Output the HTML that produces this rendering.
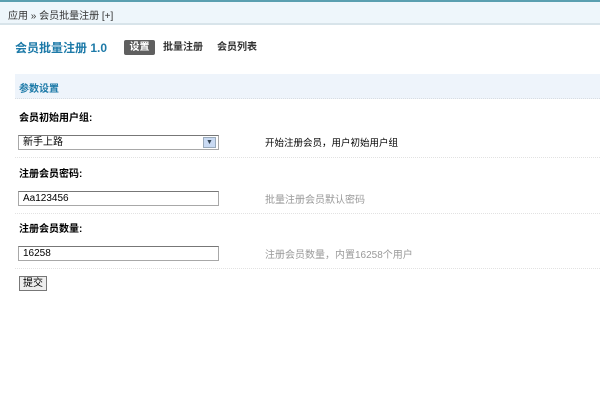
<!DOCTYPE html>
<html><head><meta charset="utf-8"><style>
*{margin:0;padding:0;box-sizing:border-box}
body{width:600px;height:407px;background:#fff;font-family:"Liberation Sans","Noto Sans CJK SC",sans-serif;font-size:10px;color:#000;position:relative;overflow:hidden}
.a{position:absolute;white-space:nowrap}
.top{left:0;top:0;width:600px;height:2px;background:#5a9fb0}
.bar{left:0;top:2px;width:600px;height:23px;background:#eef6fb;border-bottom:2px solid #d8e4ea}
.crumb{left:8px;top:7px;color:#333}
.title{left:15px;top:39px;font-size:12px;font-weight:bold;color:#1d7aa8}
.tab{top:40px;height:15px;line-height:15px;font-weight:bold;font-size:10px}
.sec{left:15px;top:74px;width:585px;height:25px;background:#eef4fb;border-bottom:1px dotted #d8dde2}
.sect{left:19px;top:80px;color:#1d7aa8;font-weight:bold}
.lbl{left:19px;font-weight:bold}
.box{left:18px;width:201px;height:15px;border:1px solid #a8a8a8;border-top-color:#777;background:#fff;padding-left:4px;line-height:13px;font-size:10px}
.hint{left:265px;color:#999}
.line{left:15px;width:585px;height:1px;border-top:1px dotted #e2e2e2}
</style></head><body>
<div class="a top"></div>
<div class="a bar"></div>
<div class="a crumb">应用 » 会员批量注册 [+]</div>
<div class="a title">会员批量注册 1.0</div>
<div class="a tab" style="left:124px;width:31px;background:#5f5f5f;color:#fff;text-align:center;border-radius:2px">设置</div>
<div class="a tab" style="left:163px;color:#333">批量注册</div>
<div class="a tab" style="left:217px;color:#333">会员列表</div>
<div class="a sec"></div>
<div class="a sect">参数设置</div>
<div class="a lbl" style="top:109px">会员初始用户组:</div>
<div class="a box" style="top:135px">新手上路</div>
<div class="a" style="left:203px;top:137px;width:13px;height:11px;background:#c9daf3;border:1px solid #9ab;color:#345;font-size:7px;text-align:center;line-height:10px">▼</div>
<div class="a" style="left:265px;top:135px;font-size:9.5px">开始注册会员，用户初始用户组</div>
<div class="a line" style="top:157px"></div>
<div class="a lbl" style="top:165px">注册会员密码:</div>
<div class="a box" style="top:191px">Aa123456</div>
<div class="a hint" style="top:191px">批量注册会员默认密码</div>
<div class="a line" style="top:213px"></div>
<div class="a lbl" style="top:220px">注册会员数量:</div>
<div class="a box" style="top:246px">16258</div>
<div class="a hint" style="top:246px">注册会员数量，内置16258个用户</div>
<div class="a line" style="top:268px"></div>
<div class="a" style="left:19px;top:276px;width:28px;height:15px;border:1px solid #777;background:#eee;text-align:center;line-height:13px">提交</div>
</body></html>
